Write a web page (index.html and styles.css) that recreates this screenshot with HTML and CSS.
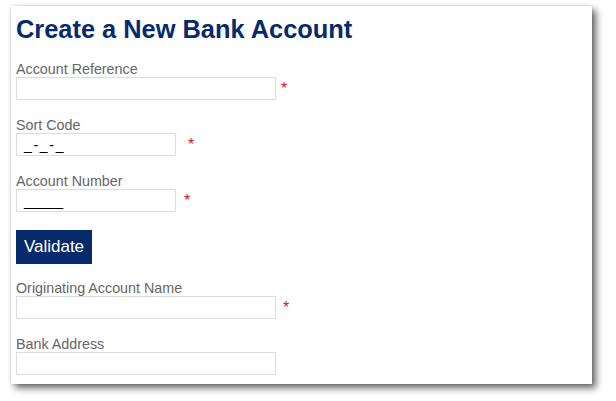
FILE: index.html
```html
<!DOCTYPE html>
<html>
<head>
<meta charset="utf-8">
<link rel="stylesheet" href="styles.css">
</head>
<body>
<div class="page">
  <div class="card">
    <h1 class="title">Create a New Bank Account</h1>
    <div class="field">
      <label class="label">Account Reference</label>
      <div class="row">
        <div class="input wide"></div>
        <span class="req r1">*</span>
      </div>
    </div>
    <div class="field">
      <label class="label">Sort Code</label>
      <div class="row">
        <div class="input narrow"><span class="mask sort">_-_-_</span></div>
        <span class="req r2">*</span>
      </div>
    </div>
    <div class="field">
      <label class="label">Account Number</label>
      <div class="row">
        <div class="input narrow"><span class="mask">_____</span></div>
        <span class="req r3">*</span>
      </div>
    </div>
    <button class="btn">Validate</button>
    <div class="field">
      <label class="label">Originating Account Name</label>
      <div class="row">
        <div class="input wide"></div>
        <span class="req r4">*</span>
      </div>
    </div>
    <div class="field last">
      <label class="label">Bank Address</label>
      <div class="row">
        <div class="input wide"></div>
      </div>
    </div>
  </div>
</div>
</body>
</html>
```
FILE: styles.css
```css
html, body {
  margin: 0;
  padding: 0;
  background: #ffffff;
}
body {
  font-family: "Liberation Sans", Arial, sans-serif;
}
.page {
  padding: 6px 0 17px 11px;
  min-height: 401px;
  box-sizing: border-box;
}
.card {
  width: 581px;
  height: 378px;
  box-sizing: border-box;
  background: #fff;
  padding: 8px 5px 0 5px;
  box-shadow: 4px 4px 7px rgba(0,0,0,0.6), 0 0 3px rgba(0,0,0,0.15);
}
.title {
  margin: 0 0 18px 0;
  font-size: 25.4px;
  line-height: 30px;
  font-weight: bold;
  color: #062a6b;
}
.field {
  margin-bottom: 18px;
}
.field.last {
  margin-bottom: 0;
}
.label {
  display: block;
  font-size: 14.3px;
  line-height: 15px;
  color: #666;
}
.row {
  display: flex;
  align-items: flex-start;
}
.input {
  height: 23px;
  box-sizing: border-box;
  border: 1px solid #dcdcdc;
  background: #fff;
  padding-left: 7px;
  font-size: 14px;
  line-height: 23px;
  color: #000;
}
.wide { width: 260px; }
.narrow { width: 160px; }
.mask.sort {
  letter-spacing: 1.7px;
}
.req {
  color: #e0101e;
  font-size: 16px;
  line-height: 16px;
  margin-top: 4px;
}
.r1 { margin-left: 5px; }
.r2 { margin-left: 12px; }
.r3 { margin-left: 8px; }
.r4 { margin-left: 7px; }
.btn {
  display: block;
  margin: 0 0 17px 0;
  width: 76px;
  height: 34px;
  border: none;
  padding: 0;
  background: #062a6b;
  color: #fff;
  font-family: "Liberation Sans", Arial, sans-serif;
  font-size: 17px;
}
```
